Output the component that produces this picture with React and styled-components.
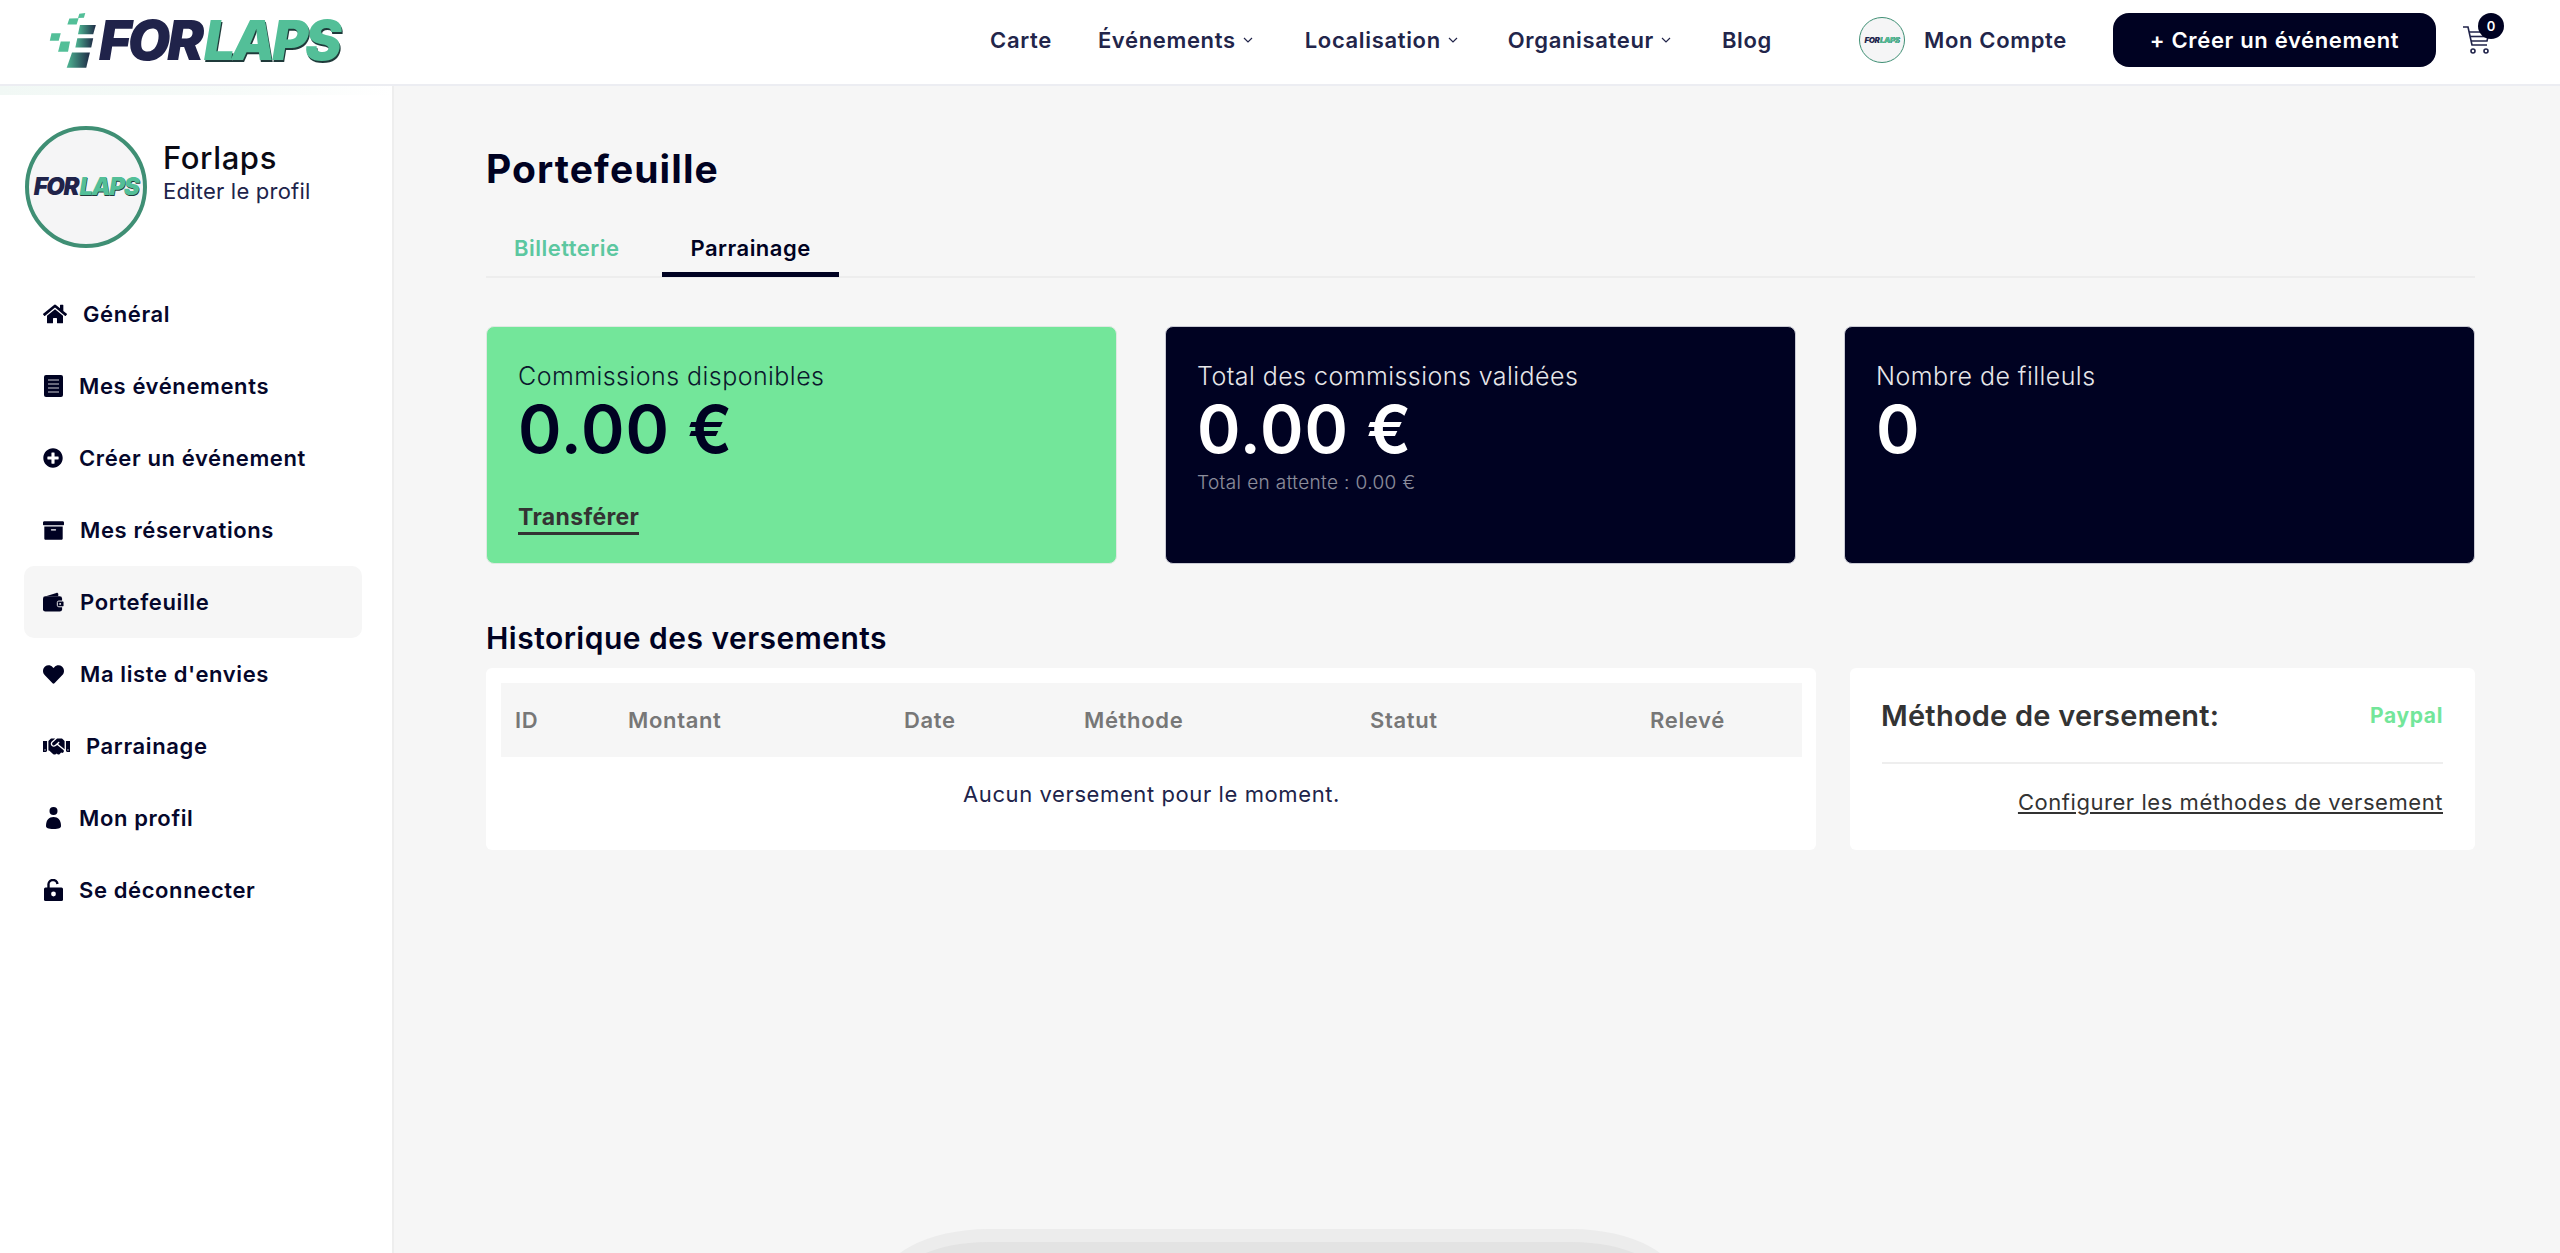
import React from "react";
import styled, { createGlobalStyle } from "styled-components";
import {
  FaHome,
  FaPlusCircle,
  FaArchive,
  FaHeart,
  FaHandshake,
} from "react-icons/fa";

const NAVY = "#000222";
const FONT = `Inter, "Noto Sans", "Liberation Sans", sans-serif`;

const GlobalStyle = createGlobalStyle`
  html, body {
    margin: 0;
    padding: 0;
    background: #f6f6f6;
    font-family: ${FONT};
  }
  * { box-sizing: border-box; }
`;

const Page = styled.div`
  position: relative;
  min-height: 100vh;
  height: 1253px;
  overflow: hidden;
  display: flex;
  flex-direction: column;
`;

const Header = styled.header`
  height: 86px;
  flex: none;
  display: flex;
  align-items: center;
  background: #fff;
  border-bottom: 2px solid #ecedf2;
  padding: 0 67px 4px 48px;
`;

const LogoLink = styled.a`
  display: flex;
  align-items: center;
  gap: 1px;
`;

const LogoWord = styled.span`
  display: inline-flex;
  font-family: ${FONT};
  font-weight: 900;
  font-style: italic;
  font-size: ${({ $size }) => $size}px;
  letter-spacing: -0.06em;
  line-height: 1;
  color: #20234a;
`;

const LogoGreen = styled.span`
  margin-left: 0.06em;
  color: #53bf98;
  text-shadow: 0.02em 0.03em 0 #1f3a3a;
`;

const Nav = styled.nav`
  margin-left: auto;
  display: flex;
  align-items: center;
`;

const NavItem = styled.a`
  display: flex;
  align-items: center;
  gap: 7px;
  margin-left: ${({ $gap }) => $gap}px;
  font-size: 22px;
  font-weight: 600;
  letter-spacing: 0.03em;
  color: #22254a;
  white-space: nowrap;
`;

const Chevron = styled.svg`
  width: 10px;
  height: 6px;
  fill: none;
  stroke: #22254a;
  stroke-width: 1.2;
`;

const Account = styled.a`
  display: flex;
  align-items: center;
  gap: 19px;
  margin-left: 87px;
  font-size: 22px;
  font-weight: 600;
  letter-spacing: 0.03em;
  color: #22254a;
  white-space: nowrap;
`;

const Avatar = styled.div`
  width: ${({ $size }) => $size}px;
  height: ${({ $size }) => $size}px;
  flex: none;
  display: flex;
  align-items: center;
  justify-content: center;
  border-radius: 50%;
  border: ${({ $border }) => $border}px solid #3f8f74;
  background: #f5f5f6;
`;

const CreateButton = styled.button`
  width: 323px;
  height: 54px;
  margin-left: 46px;
  border: none;
  border-radius: 16px;
  background: ${NAVY};
  color: #fff;
  font-family: ${FONT};
  font-size: 22px;
  font-weight: 600;
  letter-spacing: 0.03em;
`;

const CartWrap = styled.div`
  position: relative;
  width: 30px;
  height: 30px;
  margin-left: 27px;
`;

const CartBadge = styled.span`
  position: absolute;
  top: -12px;
  right: -11px;
  width: 26px;
  height: 26px;
  display: flex;
  align-items: center;
  justify-content: center;
  border-radius: 50%;
  background: ${NAVY};
  color: #fff;
  font-size: 13px;
  font-weight: 600;
`;

const Body = styled.div`
  flex: 1;
  display: flex;
  min-height: 0;
`;

const Sidebar = styled.aside`
  width: 394px;
  flex: none;
  background: #fff;
  border-right: 2px solid #eeeeee;
  padding: 40px 30px 0 24px;
  background-image: linear-gradient(90deg, #f1f8f5 0, #f7fbf9 60%, #ffffff 100%);
  background-size: 100% 9px;
  background-repeat: no-repeat;
`;

const Profile = styled.div`
  display: flex;
  gap: 16px;
  margin-left: 1px;
  margin-bottom: 30px;
`;

const ProfileText = styled.div`
  padding-top: 13px;
`;

const ProfileName = styled.div`
  font-size: 31px;
  line-height: 38px;
  font-weight: 500;
  letter-spacing: 0.02em;
  color: #0a0a14;
`;

const ProfileEdit = styled.div`
  font-size: 22px;
  line-height: 28px;
  font-weight: 400;
  letter-spacing: 0.01em;
  color: #20234a;
`;

const Menu = styled.ul`
  list-style: none;
  margin: 0;
  padding: 0;
`;

const MenuRow = styled.li`
  height: 72px;
  display: flex;
  align-items: center;
  gap: 16px;
  padding-left: 19px;
  border-radius: 10px;
  background: ${({ $active }) => ($active ? "#f6f6f6" : "transparent")};
  color: #05072b;
  font-size: 22px;
  font-weight: 600;
  letter-spacing: 0.028em;
`;

const MenuIcon = styled.span`
  width: ${({ $w }) => $w}px;
  flex: none;
  display: flex;
  align-items: center;
  justify-content: center;
  font-size: ${({ $w }) => $w}px;
  color: ${NAVY};
`;

const Main = styled.main`
  flex: 1;
  min-width: 0;
  padding: 60px 85px 0 92px;
`;

const Title = styled.h1`
  margin: 0 0 32px;
  font-size: 39px;
  line-height: 46px;
  font-weight: 700;
  letter-spacing: 0.028em;
  color: ${NAVY};
`;

const Tabs = styled.div`
  display: flex;
  gap: 15px;
  border-bottom: 2px solid #ededed;
  margin-bottom: 48px;
`;

const Tab = styled.a`
  padding: 12px 28px 12px;
  line-height: 24px;
  font-size: 22px;
  font-weight: 600;
  letter-spacing: 0.022em;
  margin-bottom: -1px;
  color: ${({ $active }) => ($active ? NAVY : "#5cc7a0")};
  border-bottom: 5px solid ${({ $active }) => ($active ? NAVY : "transparent")};
`;

const Cards = styled.div`
  display: grid;
  grid-template-columns: repeat(3, 631px);
  gap: 48px;
`;

const StatCard = styled.div`
  height: 238px;
  display: flex;
  flex-direction: column;
  padding: 31px 31px 28px;
  border-radius: 8px;
  border: 1px solid ${({ $green }) => ($green ? "#dfe9e2" : "#c9cad3")};
  background: ${({ $green }) => ($green ? "#73e69a" : NAVY)};
  color: ${({ $green }) => ($green ? NAVY : "#fff")};
`;

const StatLabel = styled.div`
  font-size: 25px;
  line-height: 36px;
  font-weight: 300;
  letter-spacing: 0.018em;
  opacity: 0.9;
`;

const StatValue = styled.div`
  font-size: 66px;
  line-height: 72px;
  margin-top: -1px;
  font-weight: 600;
  letter-spacing: 0.015em;
`;

const StatNote = styled.div`
  margin-top: 7px;
  font-size: 19px;
  line-height: 22px;
  font-weight: 300;
  letter-spacing: 0.02em;
  opacity: 0.55;
`;

const TransferLink = styled.a`
  margin-top: auto;
  align-self: flex-start;
  padding-bottom: 2px;
  border-bottom: 3px solid #333;
  font-size: 23px;
  line-height: 26px;
  font-weight: 700;
  letter-spacing: 0.015em;
  color: #333;
`;

const SectionTitle = styled.h2`
  margin: 56px 0 12px;
  font-size: 30px;
  line-height: 36px;
  font-weight: 600;
  letter-spacing: 0.016em;
  color: ${NAVY};
`;

const Bottom = styled.div`
  display: grid;
  grid-template-columns: 1330px 625px;
  gap: 34px;
`;

const Panel = styled.div`
  height: 182px;
  background: #fff;
  border-radius: 6px;
`;

const TablePanel = styled(Panel)`
  padding: 15px 14px 15px 15px;
`;

const TableHead = styled.div`
  height: 74px;
  display: grid;
  grid-template-columns: 113px 276px 180px 286px 280px 166px;
  align-items: center;
  background: #f6f6f6;
  font-size: 22px;
  font-weight: 600;
  letter-spacing: 0.03em;
  color: #777;
`;

const HeadCell = styled.div`
  padding-left: 14px;
`;

const EmptyRow = styled.div`
  height: 74px;
  display: flex;
  align-items: center;
  justify-content: center;
  font-size: 22px;
  font-weight: 400;
  letter-spacing: 0.027em;
  color: #20234a;
`;

const MethodPanel = styled(Panel)`
  padding: 0 32px;
`;

const MethodRow = styled.div`
  height: 96px;
  display: flex;
  align-items: center;
  justify-content: space-between;
  border-bottom: 2px solid #eeeeee;
`;

const MethodTitle = styled.div`
  font-size: 29px;
  font-weight: 600;
  letter-spacing: 0.008em;
  margin-left: -1px;
  color: #333;
`;

const MethodValue = styled.div`
  font-size: 21px;
  font-weight: 700;
  letter-spacing: 0.03em;
  color: #73e69a;
`;

const ConfigLink = styled.a`
  display: block;
  margin-top: 26px;
  text-align: right;
  font-size: 22px;
  line-height: 24px;
  font-weight: 400;
  letter-spacing: 0.025em;
  text-decoration: underline;
  color: #333;
`;

const FloatingBar = styled.div`
  position: absolute;
  left: 878px;
  top: 1229px;
  width: 804px;
  height: 140px;
  border: 13px solid #ececec;
  border-radius: 110px / 60px;
  background: #e3e3e3;
`;

function Logo() {
  return (
    <LogoLink>
      <svg width="50" height="58" viewBox="140 30 150 175">
        <defs>
          <linearGradient id="bar" x1="0" x2="1" y1="0" y2="0">
            <stop offset="0" stopColor="#4fb794" />
            <stop offset="1" stopColor="#1f2b46" />
          </linearGradient>
        </defs>
        <g fill="#53bf98">
          <polygon points="234,38 252,36 248,50 230,51" />
          <polygon points="204,53 232,52 226,71 198,71" />
          <polygon points="150,97 178,97 172,120 145,120" />
          <polygon points="178,122 206,122 200,153 170,153" />
        </g>
        <polygon points="236,72 284,72 276,100 230,100" fill="url(#bar)" />
        <polygon points="228,112 276,112 270,140 222,140" fill="url(#bar)" />
        <polygon points="212,155 266,155 255,201 196,201" fill="url(#bar)" />
      </svg>
      <LogoWord $size={55}>
        FOR<LogoGreen>LAPS</LogoGreen>
      </LogoWord>
    </LogoLink>
  );
}

function AvatarLogo({ size, border, text }) {
  return (
    <Avatar $size={size} $border={border}>
      <LogoWord $size={text}>
        FOR<LogoGreen>LAPS</LogoGreen>
      </LogoWord>
    </Avatar>
  );
}

function DownIcon() {
  return (
    <Chevron viewBox="0 0 10 6">
      <path d="M1 1l4 4 4-4" />
    </Chevron>
  );
}

function CartIcon() {
  return (
    <svg width="30" height="30" viewBox="0 0 30 30" fill="none" stroke="#20234a" strokeWidth="1.6">
      <path d="M0 2h5l4 18h15" />
      <path d="M6 7h20l-2 9H8" />
      <path d="M7 11.5h18" />
      <circle cx="10" cy="26" r="2" />
      <circle cx="23" cy="26" r="2" />
    </svg>
  );
}

function DocIcon() {
  return (
    <svg width="19" height="22" viewBox="0 0 19 22">
      <rect width="19" height="22" rx="2" fill={NAVY} />
      <path d="M4 5h11M4 9h11M4 13h11M4 17h11" stroke="#fff" strokeWidth="1.2" opacity=".8" />
    </svg>
  );
}

function WalletIcon() {
  return (
    <svg width="22" height="20" viewBox="0 0 22 20">
      <path d="M3 4L14 0.5c1-.3 2 .3 2 1.5V4z" fill={NAVY} />
      <rect y="4" width="20" height="16" rx="2.5" fill={NAVY} />
      <rect x="15" y="9" width="7" height="6" rx="1.5" fill={NAVY} stroke="#f6f6f6" strokeWidth="1" />
      <circle cx="18" cy="12" r="1" fill="#f6f6f6" />
    </svg>
  );
}

function PersonIcon() {
  return (
    <svg width="15" height="22" viewBox="0 0 15 22" fill={NAVY}>
      <circle cx="7.5" cy="4" r="4" />
      <path d="M0 19c0-6 3-9 7.5-9S15 13 15 19c0 2-2 3-7.5 3S0 21 0 19z" />
    </svg>
  );
}

function LockIcon() {
  return (
    <svg width="19" height="22" viewBox="0 0 19 22">
      <path d="M4.5 10V6a4.5 4.5 0 0 1 9-1" fill="none" stroke={NAVY} strokeWidth="2.4" />
      <rect y="8.5" width="19" height="13.5" rx="1.5" fill={NAVY} />
      <circle cx="9.5" cy="15" r="2.4" fill="#fff" />
    </svg>
  );
}

const menu = [
  { label: "Général", w: 24, icon: <FaHome /> },
  { label: "Mes événements", w: 20, icon: <DocIcon /> },
  { label: "Créer un événement", w: 20, icon: <FaPlusCircle /> },
  { label: "Mes réservations", w: 21, icon: <FaArchive /> },
  { label: "Portefeuille", w: 21, icon: <WalletIcon />, active: true },
  { label: "Ma liste d'envies", w: 21, icon: <FaHeart /> },
  { label: "Parrainage", w: 27, icon: <FaHandshake /> },
  { label: "Mon profil", w: 20, icon: <PersonIcon /> },
  { label: "Se déconnecter", w: 20, icon: <LockIcon /> },
];

const columns = ["ID", "Montant", "Date", "Méthode", "Statut", "Relevé"];

export default function App() {
  return (
    <Page>
      <GlobalStyle />
      <Header>
        <Logo />
        <Nav>
          <NavItem $gap={0}>Carte</NavItem>
          <NavItem $gap={46}>
            Événements <DownIcon />
          </NavItem>
          <NavItem $gap={52}>
            Localisation <DownIcon />
          </NavItem>
          <NavItem $gap={50}>
            Organisateur <DownIcon />
          </NavItem>
          <NavItem $gap={51}>Blog</NavItem>
        </Nav>
        <Account>
          <AvatarLogo size={46} border={1} text={8} />
          Mon Compte
        </Account>
        <CreateButton>+ Créer un événement</CreateButton>
        <CartWrap>
          <CartIcon />
          <CartBadge>0</CartBadge>
        </CartWrap>
      </Header>
      <Body>
        <Sidebar>
          <Profile>
            <AvatarLogo size={122} border={4} text={24} />
            <ProfileText>
              <ProfileName>Forlaps</ProfileName>
              <ProfileEdit>Editer le profil</ProfileEdit>
            </ProfileText>
          </Profile>
          <Menu>
            {menu.map((item) => (
              <MenuRow key={item.label} $active={item.active}>
                <MenuIcon $w={item.w}>{item.icon}</MenuIcon>
                {item.label}
              </MenuRow>
            ))}
          </Menu>
        </Sidebar>
        <Main>
          <Title>Portefeuille</Title>
          <Tabs>
            <Tab>Billetterie</Tab>
            <Tab $active>Parrainage</Tab>
          </Tabs>
          <Cards>
            <StatCard $green>
              <StatLabel>Commissions disponibles</StatLabel>
              <StatValue>0.00 €</StatValue>
              <TransferLink>Transférer</TransferLink>
            </StatCard>
            <StatCard>
              <StatLabel>Total des commissions validées</StatLabel>
              <StatValue>0.00 €</StatValue>
              <StatNote>Total en attente : 0.00 €</StatNote>
            </StatCard>
            <StatCard>
              <StatLabel>Nombre de filleuls</StatLabel>
              <StatValue>0</StatValue>
            </StatCard>
          </Cards>
          <SectionTitle>Historique des versements</SectionTitle>
          <Bottom>
            <TablePanel>
              <TableHead>
                {columns.map((col) => (
                  <HeadCell key={col}>{col}</HeadCell>
                ))}
              </TableHead>
              <EmptyRow>Aucun versement pour le moment.</EmptyRow>
            </TablePanel>
            <MethodPanel>
              <MethodRow>
                <MethodTitle>Méthode de versement:</MethodTitle>
                <MethodValue>Paypal</MethodValue>
              </MethodRow>
              <ConfigLink>Configurer les méthodes de versement</ConfigLink>
            </MethodPanel>
          </Bottom>
        </Main>
      </Body>
      <FloatingBar />
    </Page>
  );
}
